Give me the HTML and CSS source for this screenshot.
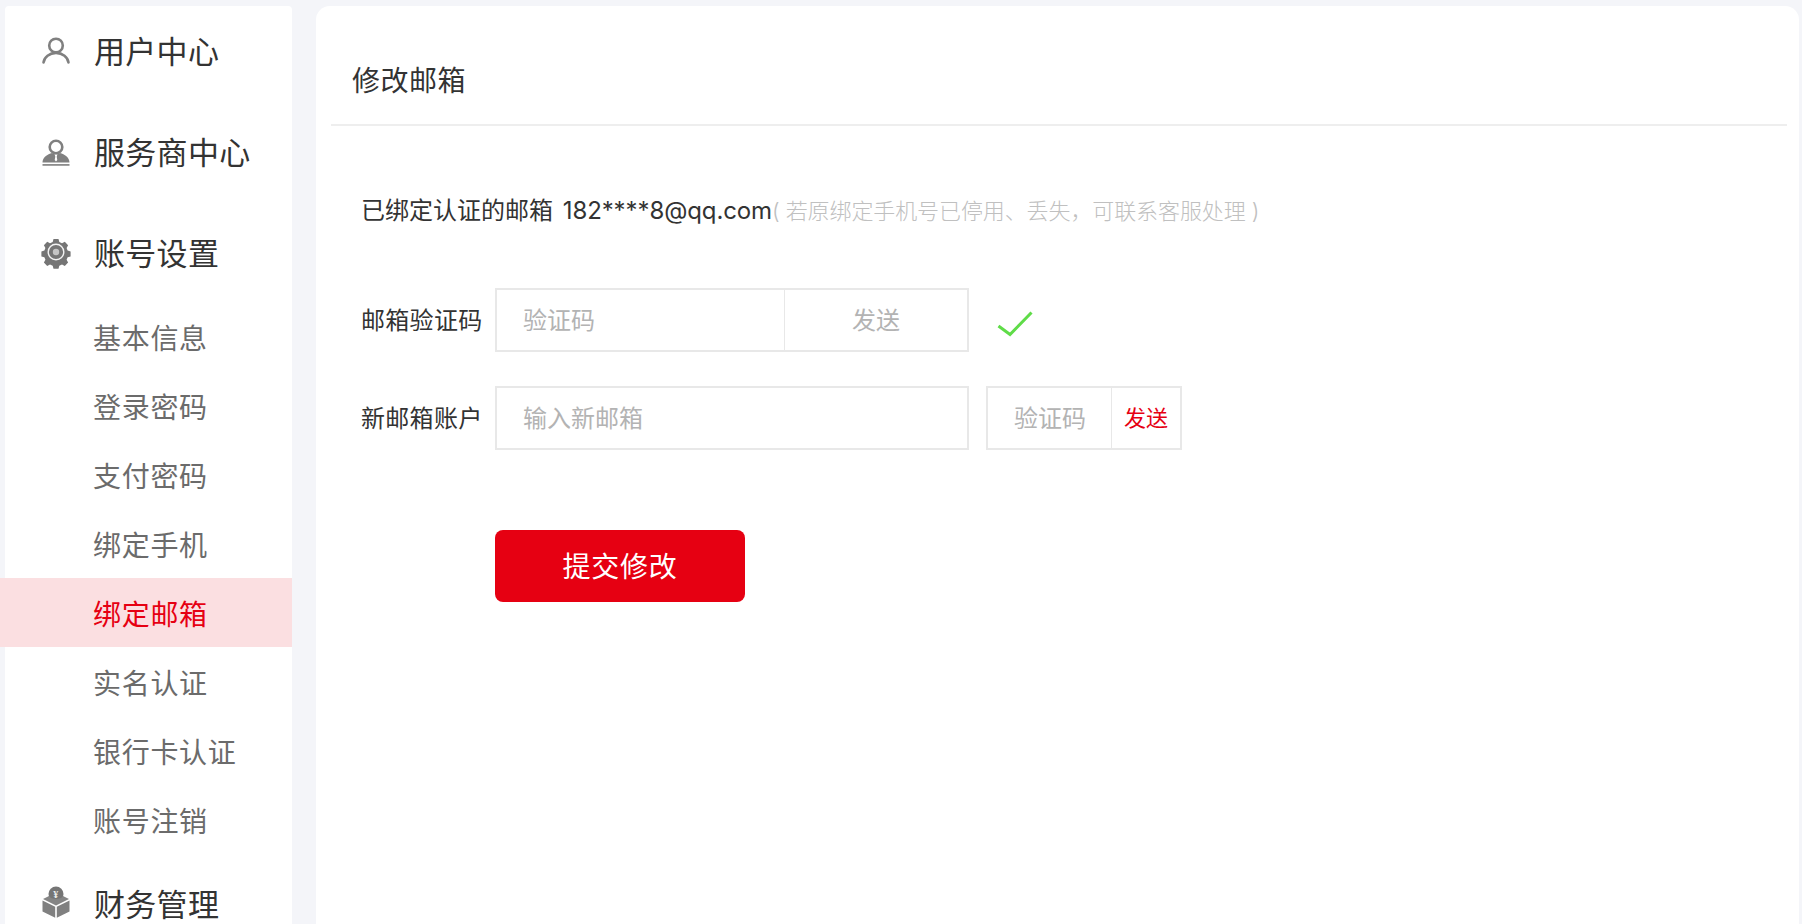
FILE: index.html
```html
<!DOCTYPE html>
<html lang="zh-CN">
<head>
    <meta charset="UTF-8">
    <meta name="viewport" content="width=device-width, initial-scale=1.0">
    <title>修改邮箱</title>
    <link rel="stylesheet" href="styles.css">
</head>
<body>
    <div class="page">
        <aside class="sidebar">
            <div class="menu-title">
                <svg class="menu-icon" viewBox="0 -1.500 28 28">
                    <circle cx="14" cy="9" r="6.8" fill="none" stroke="#808080" stroke-width="2.6"/>
                    <path d="M1.5 26c.6-5.4 6-9.6 12.500-9.600s11.900 4.200 12.500 9.600" fill="none" stroke="#808080" stroke-width="2.600" stroke-linecap="round"/>
                </svg>
                <span>用户中心</span>
            </div>
            <div class="menu-title">
                <svg class="menu-icon" viewBox="0 -3 28 28">
                    <circle cx="14" cy="8" r="6.300" fill="none" stroke="#808080" stroke-width="2.600"/>
                    <path d="M0.500 23.500c0-5 5-8.500 9.500-9.500l4 2 4-2c4.500 1 9.500 4.500 9.500 9.500z" fill="#808080"/>
                    <path d="M12.800 16h2.400l-.5 1.800.6 3.200-1.300 1.500-1.300-1.500.6-3.200z" fill="#fff"/>
                    <rect x="0.500" y="25" width="27" height="1.800" fill="#8c8c8c"/>
                </svg>
                <span>服务商中心</span>
            </div>
            <div class="menu-title">
                <svg class="menu-icon" viewBox="0 -1 28 28">
                    <path d="M11.500 1h5l.8 3 2.700 1.200 2.800-1.500 3.300 3.500-1.500 2.800 1 2.500 3 .9v5l-3 .9-1 2.500 1.500 2.800-3.300 3.500-2.800-1.500-2.700 1.200-.8 3h-5l-.8-3-2.700-1.200-2.800 1.500-3.300-3.500 1.500-2.800-1-2.500-3-.9v-5l3-.9 1-2.500-1.500-2.800 3.300-3.500 2.800 1.500 2.700-1.200z" fill="#757575"/>
                    <circle cx="14" cy="14" r="7.800" fill="none" stroke="#f2f2f2" stroke-width="1.400"/>
                    <circle cx="14" cy="14" r="3.200" fill="#c4c4c4"/>
                </svg>
                <span>账号设置</span>
            </div>
            <ul class="submenu">
                <li>基本信息</li>
                <li>登录密码</li>
                <li>支付密码</li>
                <li>绑定手机</li>
                <li class="active">绑定邮箱</li>
                <li>实名认证</li>
                <li>银行卡认证</li>
                <li>账号注销</li>
            </ul>
            <div class="menu-title">
                <svg class="menu-icon" viewBox="0 0 28 32">
                    <circle cx="14" cy="8" r="7.500" fill="#757575"/>
                    <text x="14" y="11.500" class="coin-text">¥</text>
                    <path d="M1 13l6-3c1.500 4 12.500 4 14 0l6 3-13 6.500z" fill="#858585"/>
                    <path d="M0.500 14.500l12.700 6.300v11l-12.700-6.300z" fill="#808080"/>
                    <path d="M27.500 14.500l-12.700 6.300v11l12.700-6.300z" fill="#808080"/>
                </svg>
                <span>财务管理</span>
            </div>
        </aside>

        <main class="panel">
            <div class="panel-head">修改邮箱</div>
            <div class="panel-body">
                <p class="bound-line">
                    已绑定认证的邮箱 <span class="email">182****8@qq.com</span><span class="hint">( 若原绑定手机号已停用、丢失，可联系客服处理 )</span>
                </p>
                <div class="form-row">
                    <label class="form-label" for="emailCode">邮箱验证码</label>
                    <div class="field field-wide">
                        <input type="text" id="emailCode" placeholder="验证码">
                        <button class="send-btn send-wide" type="button">发送</button>
                    </div>
                    <svg class="check" viewBox="0 0 36 26">
                        <path d="M1.500 15l11.500 8.500L34.500 1.500" fill="none" stroke="#5fdc48" stroke-width="3"/>
                    </svg>
                </div>
                <div class="form-row">
                    <label class="form-label" for="newEmail">新邮箱账户</label>
                    <div class="field field-wide">
                        <input type="text" id="newEmail" placeholder="输入新邮箱">
                    </div>
                    <div class="field field-small">
                        <input type="text" placeholder="验证码">
                        <button class="send-btn send-red" type="button">发送</button>
                    </div>
                </div>
                <button class="submit-btn" type="button">提交修改</button>
            </div>
        </main>
    </div>
</body>
</html>
```

FILE: styles.css
```css
* {
    box-sizing: border-box;
}
html, body {
    height: 100%;
}
body {
    margin: 0;
    overflow: hidden;
    background: #f4f5f9;
    font-family: "Noto Sans CJK SC", "Inter", sans-serif;
    color: #333;
}
.page {
    display: flex;
    gap: 24px;
    height: 100vh;
    padding: 6px 3px 0 5px;
}
.sidebar {
    flex: 0 0 287px;
    background: #fff;
    border-radius: 4px 4px 0 0;
}
.menu-title {
    display: flex;
    align-items: center;
    gap: 24px;
    height: 86px;
    margin-bottom: 15px;
    padding-left: 37px;
    font-size: 31px;
    letter-spacing: .3px;
    color: #333;
}
.menu-icon {
    flex: none;
    width: 28px;
    height: 28px;
    overflow: visible;
}
.menu-title:last-child .menu-icon {
    height: 32px;
}
.coin-text {
    font-family: "Liberation Serif", serif;
    font-size: 10px;
    font-weight: bold;
    fill: #eee;
    text-anchor: middle;
}
.submenu {
    list-style: none;
    margin: -7px 0 5px;
    padding: 0;
}
.submenu li {
    height: 69px;
    padding: 2px 0 0 88px;
    font-size: 28px;
    letter-spacing: .7px;
    line-height: 66px;
    color: #6b6b6b;
}
.submenu .active {
    margin-left: -5px;
    padding-left: 93px;
    background: #fbdfe1;
    color: #e60012;
}
.panel {
    flex: 1;
    min-width: 0;
    padding: 0 12px 0 15px;
    background: #fff;
    border-radius: 14px 14px 0 0;
}
.panel-head {
    height: 120px;
    padding: 0 0 0 21px;
    font-size: 28px;
    letter-spacing: .5px;
    line-height: 146px;
    color: #333;
    border-bottom: 2px solid #eee;
}
.panel-body {
    padding: 0 0 0 30px;
}
.bound-line {
    margin: 0;
    padding-top: 67px;
    font-family: "Inter", "Noto Sans CJK SC", sans-serif;
    font-size: 24px;
    line-height: 36px;
    color: #333;
}
.email {
    margin-left: 3px;
    letter-spacing: -.1px;
}
.hint {
    font-size: 22px;
    font-weight: 300;
    letter-spacing: -.1px;
    color: #c0c0c0;
}
.form-row {
    display: flex;
    align-items: center;
    margin-top: 34px;
    height: 64px;
}
.bound-line + .form-row {
    margin-top: 59px;
}
.form-label {
    flex: 0 0 134px;
    padding-bottom: 4px;
    font-size: 24px;
    letter-spacing: .3px;
    color: #333;
}
.field {
    display: flex;
    min-width: 0;
    height: 64px;
    background: #fff;
    border: 2px solid #e8e8e8;
}
.field-wide {
    flex: 0 0 474px;
}
.field-small {
    flex: 0 0 196px;
    margin-left: 17px;
}
.field input {
    flex: 1;
    width: 0;
    min-width: 0;
    padding: 0 0 4px 26px;
    border: none;
    outline: none;
    background: transparent;
    font-family: inherit;
    font-size: 24px;
}
.field input::placeholder {
    color: #b3b3b3;
    opacity: 1;
}
.send-btn {
    padding: 0 0 4px;
    background: transparent;
    border: none;
    border-left: 1px solid #e8e8e8;
    font-family: inherit;
    font-size: 24px;
    color: #b3b3b3;
}
.send-wide {
    flex: 0 0 183px;
}
.send-red {
    flex: 0 0 69px;
    font-size: 22px;
    color: #e60012;
}
.check {
    width: 36px;
    height: 26px;
    margin: 7px 0 0 28px;
}
.submit-btn {
    display: block;
    width: 250px;
    height: 72px;
    margin: 80px 0 0 134px;
    padding: 0 0 2px;
    background: #e60012;
    border: none;
    border-radius: 8px;
    font-family: inherit;
    font-size: 28px;
    letter-spacing: .8px;
    color: #fff;
}
```
